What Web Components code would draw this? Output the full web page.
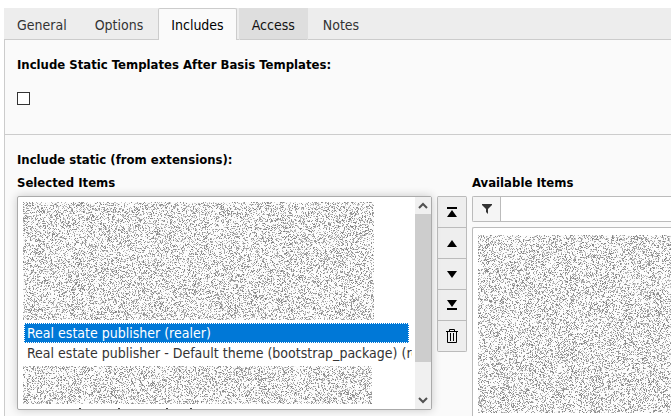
<!DOCTYPE html>
<html lang="en">
<head>
<meta charset="utf-8">
<title>Template record</title>
<style>
  html {
    overflow: hidden;
  }

  body {
    margin: 8px 0 0 4px;
    background: #fff;
    color: #000;
    font: 13px/20px "DejaVu Sans Condensed", Verdana, sans-serif;
  }
</style>
</head>
<body>
<record-form></record-form>

<script>
class TabBar extends HTMLElement {
  constructor() {
    super();
    this.shadowDOM = this.attachShadow({mode: 'open'});
  }

  connectedCallback() {
    this.render();
  }

  render() {
    this.shadowDOM.innerHTML = `
      <style>
        :host {
          display: block;
          background: #ededed;
        }

        .tabs {
          display: flex;
          gap: 2px;
          box-shadow: inset 0 -1px #ccc;
        }

        button {
          height: 32px;
          padding: 0 12px;
          border: 1px solid transparent;
          border-bottom: 0;
          background: none;
          color: #333;
          font: inherit;
          font-size: 14px;
        }

        .active {
          border-color: #ccc;
          border-radius: 2px 2px 0 0;
          background: #fafafa;
          color: #000;
        }

        .hover {
          background: #dedede;
          box-shadow: inset 0 -1px #ccc;
          color: #111;
        }
      </style>
      <div class="tabs" role="tablist">
        <button role="tab">General</button>
        <button role="tab">Options</button>
        <button role="tab" class="active" aria-selected="true">Includes</button>
        <button role="tab" class="hover">Access</button>
        <button role="tab">Notes</button>
      </div>
    `;
  }
}

customElements.define('tab-bar', TabBar);

class NoisePatch extends HTMLElement {
  constructor() {
    super();
    this.shadowDOM = this.attachShadow({mode: 'open'});
  }

  connectedCallback() {
    this.render();
    this.paint();
  }

  paint() {
    const canvas = this.shadowDOM.querySelector('canvas');
    const width = canvas.width = this.clientWidth;
    const height = canvas.height = this.clientHeight;
    const context = canvas.getContext('2d');
    const pixels = context.createImageData(width, height);
    let seed = 7321 + width;
    const random = () => {
      seed = (Math.imul(seed, 1664525) + 1013904223) >>> 0;
      return seed / 4294967296;
    };
    for (let i = 0; i < pixels.data.length; i += 4) {
      const tone = random() < 0.34 ? 125 + random() * 85 : 248 + random() * 7;
      pixels.data[i] = pixels.data[i + 1] = pixels.data[i + 2] = tone;
      pixels.data[i + 3] = 255;
    }
    context.putImageData(pixels, 0, 0);
  }

  render() {
    this.shadowDOM.innerHTML = `
      <style>
        :host {
          display: block;
          overflow: hidden;
          pointer-events: none;
        }

        canvas {
          display: block;
        }
      </style>
      <canvas></canvas>
    `;
  }
}

customElements.define('noise-patch', NoisePatch);

class SelectedList extends HTMLElement {
  constructor() {
    super();
    this.shadowDOM = this.attachShadow({mode: 'open'});
  }

  connectedCallback() {
    this.render();
  }

  render() {
    this.shadowDOM.innerHTML = `
      <style>
        :host {
          display: flex;
          position: relative;
          height: 212px;
          border: 1px solid #aaa;
          border-radius: 2px;
          background: #fff;
          box-shadow: 0 0 10px rgba(0, 0, 0, 0.2);
        }

        select {
          flex: 1;
          min-width: 0;
          height: 212px;
          margin: 0 3px 0 0;
          padding: 6px 3px 0 6px;
          border: 0;
          outline: 0;
          background: none;
          font: inherit;
          font-size: 14px;
          overflow: hidden;
          scrollbar-width: none;
        }

        option {
          height: 20px;
          min-height: 20px;
          box-sizing: border-box;
          padding: 2px 3px 0;
          color: #333;
          line-height: 18px;
          overflow: visible;
        }

        option:checked {
          background: #0078d7 linear-gradient(#0078d7, #0078d7);
          color: #fff !important;
          outline: 1px dotted #fff;
          outline-offset: -1px;
        }

        .scrollbar {
          display: flex;
          flex-direction: column;
          width: 16px;
          background: #f0f0f0;
        }

        .thumb {
          height: 148px;
          margin-bottom: auto;
          background: #cdcdcd;
        }

        svg {
          display: block;
          fill: none;
          stroke: #505050;
          stroke-width: 2;
        }

        noise-patch {
          position: absolute;
          left: 5px;
        }

        .upper {
          top: 5px;
          right: 57px;
          height: 118px;
        }

        .lower {
          top: 169px;
          right: 59px;
          height: 38px;
        }

        .cut {
          position: absolute;
          left: 0;
          bottom: 0;
          stroke: none;
          fill: #444;
        }
      </style>
      <select size="10" aria-label="Selected Items">
        <option></option>
        <option></option>
        <option></option>
        <option></option>
        <option></option>
        <option></option>
        <option selected>Real estate publisher (realer)</option>
        <option>Real estate publisher - Default theme (bootstrap_package) (realer)</option>
        <option></option>
        <option></option>
      </select>
      <div class="scrollbar">
        <svg width="16" height="17"><path d="M4 11l4-4 4 4"/></svg>
        <div class="thumb"></div>
        <svg width="16" height="17"><path d="M4 6l4 4 4-4"/></svg>
      </div>
      <noise-patch class="upper"></noise-patch>
      <noise-patch class="lower"></noise-patch>
      <svg class="cut" width="180" height="1"><path d="M61 0h2v1h-2zM100 0h2v1h-2zM148 0h2v1h-2zM172 0h2v1h-2z"/></svg>
    `;
  }
}

customElements.define('selected-list', SelectedList);

class MoveButtons extends HTMLElement {
  constructor() {
    super();
    this.shadowDOM = this.attachShadow({mode: 'open'});
  }

  connectedCallback() {
    this.render();
  }

  render() {
    this.shadowDOM.innerHTML = `
      <style>
        :host {
          display: flex;
          flex-direction: column;
          border: 1px solid #bbb;
          border-top: 0;
          border-radius: 2px;
        }

        button {
          display: flex;
          align-items: center;
          justify-content: center;
          height: 31px;
          padding: 0;
          border: 0;
          border-top: 1px solid #bbb;
          background: #eee;
        }

        .outline {
          fill: none;
          stroke: #000;
        }
      </style>
      <button aria-label="Move to top">
        <svg width="16" height="16"><path d="M3 3h10v2H3zM8 6l5 7H3z"/></svg>
      </button>
      <button aria-label="Move up">
        <svg width="16" height="16"><path d="M8 5l5 7H3z"/></svg>
      </button>
      <button aria-label="Move down">
        <svg width="16" height="16"><path d="M8 12l5-7H3z"/></svg>
      </button>
      <button aria-label="Move to bottom">
        <svg width="16" height="16"><path d="M3 11h10v2H3zM8 10l5-7H3z"/></svg>
      </button>
      <button aria-label="Remove">
        <svg class="outline" width="16" height="16"><path d="M2 3.500h12M5.500 3.500v-2h5v2M3.500 3.500v11h9v-11M6.500 5v8M9.500 5v8"/></svg>
      </button>
    `;
  }
}

customElements.define('move-buttons', MoveButtons);

class AvailableList extends HTMLElement {
  constructor() {
    super();
    this.shadowDOM = this.attachShadow({mode: 'open'});
  }

  connectedCallback() {
    this.render();
  }

  render() {
    this.shadowDOM.innerHTML = `
      <style>
        :host {
          display: flex;
          flex-direction: column;
          gap: 5px;
        }

        .filter {
          display: flex;
          height: 24px;
          border: 1px solid #bbb;
          border-right: 0;
          border-radius: 2px 0 0 2px;
          background: #fff;
        }

        label {
          display: flex;
          align-items: center;
          justify-content: center;
          width: 27px;
          border-right: 1px solid #bbb;
          background: #f5f5f5;
        }

        input {
          flex: 1;
          min-width: 0;
          padding: 0 6px;
          border: 0;
          background: none;
          font: inherit;
        }

        .items {
          position: relative;
          height: 200px;
          border: 1px solid #bbb;
          border-right: 0;
          border-radius: 2px 0 0 2px;
          background: #fff;
        }

        select {
          display: block;
          width: 100%;
          height: 100%;
          border: 0;
          background: none;
          scrollbar-width: none;
        }

        noise-patch {
          position: absolute;
          top: 7px;
          left: 5px;
          right: 0;
          height: 178px;
        }
      </style>
      <div class="filter">
        <label for="filter" aria-label="Filter">
          <svg width="10" height="10" fill="#333"><path d="M0 0h10v1L6 5v5L4 8V5L0 1z"/></svg>
        </label>
        <input id="filter" type="text">
      </div>
      <div class="items">
        <select size="10" aria-label="Available Items"></select>
        <noise-patch></noise-patch>
      </div>
    `;
  }
}

customElements.define('available-list', AvailableList);

class FormSection extends HTMLElement {
  constructor() {
    super();
    this.shadowDOM = this.attachShadow({mode: 'open'});
  }

  connectedCallback() {
    this.render();
  }

  render() {
    this.shadowDOM.innerHTML = `
      <style>
        :host {
          display: block;
          padding: 15px 0 0 12px;
        }

        ::slotted([slot=title]) {
          display: block;
          font-weight: bold;
        }
      </style>
      <slot name="title"></slot>
      <slot></slot>
    `;
  }
}

customElements.define('form-section', FormSection);

class RecordForm extends HTMLElement {
  constructor() {
    super();
    this.shadowDOM = this.attachShadow({mode: 'open'});
  }

  connectedCallback() {
    this.render();
  }

  render() {
    this.shadowDOM.innerHTML = `
      <style>
        :host {
          display: block;
        }

        .panel {
          border-left: 1px solid #ccc;
          background: #fafafa;
        }

        .first {
          padding-bottom: 29px;
          border-bottom: 1px solid #ccc;
        }

        input {
          display: block;
          appearance: none;
          width: 13px;
          height: 13px;
          margin: 17px 0 0;
          border: 1px solid #333;
          background: #fff;
        }

        .columns {
          display: grid;
          grid-template-columns: minmax(0, 415fr) 30px minmax(0, 199fr);
          column-gap: 5px;
          align-items: start;
        }

        h4 {
          margin: 3px 0;
          font-size: inherit;
        }

        move-buttons {
          grid-row: 2;
          grid-column: 2;
        }

        .right {
          grid-column: 3;
        }
      </style>
      <tab-bar></tab-bar>
      <div class="panel">
        <form-section class="first">
          <label slot="title" for="basis">Include Static Templates After Basis Templates:</label>
          <input id="basis" type="checkbox">
        </form-section>
        <form-section>
          <span slot="title">Include static (from extensions):</span>
          <div class="columns">
            <h4>Selected Items</h4>
            <h4 class="right">Available Items</h4>
            <selected-list></selected-list>
            <move-buttons></move-buttons>
            <available-list></available-list>
          </div>
        </form-section>
      </div>
    `;
  }
}

customElements.define('record-form', RecordForm);
</script>
</body>
</html>
